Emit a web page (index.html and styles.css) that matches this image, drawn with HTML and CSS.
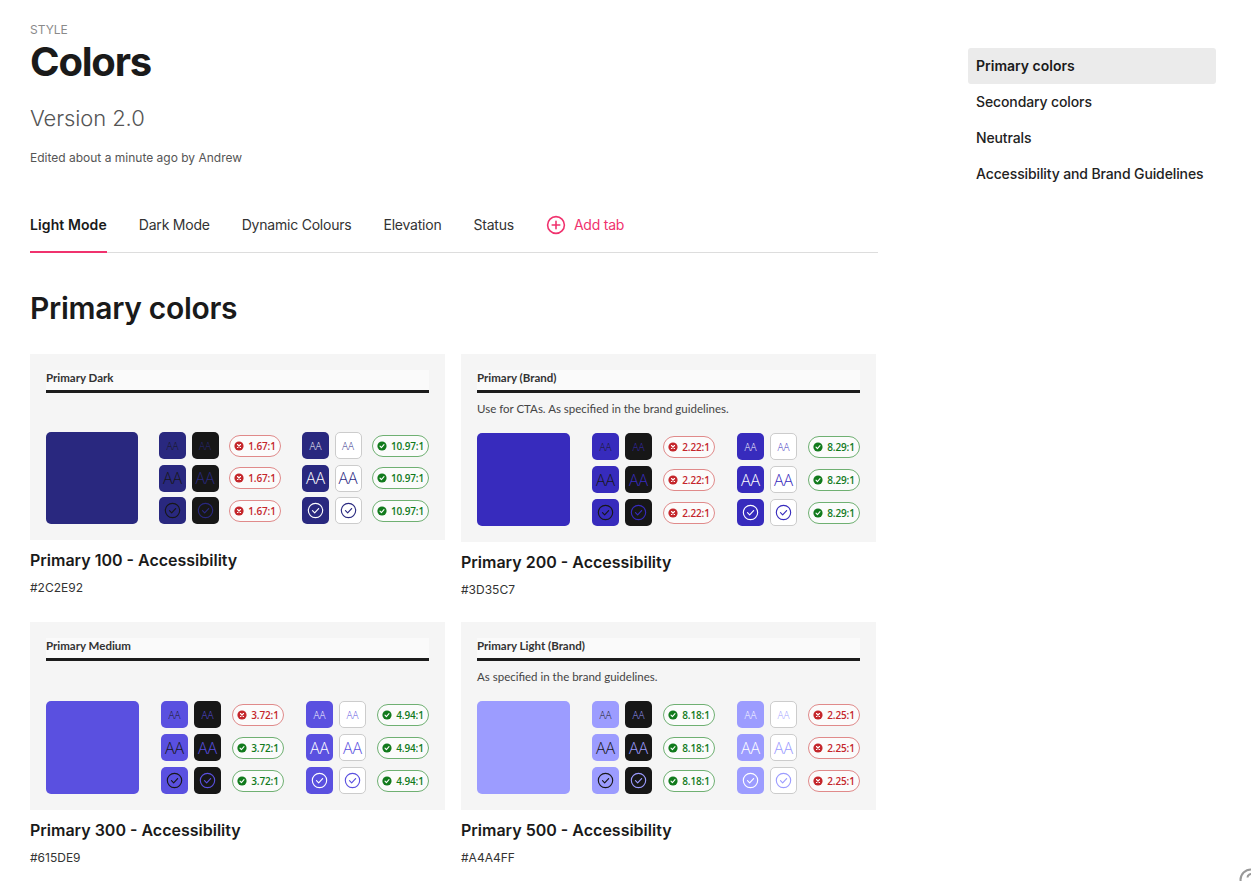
FILE: index.html
```html
<!DOCTYPE html>
<html lang="en">

<head>
    <meta charset="UTF-8">
    <meta name="viewport" content="width=device-width, initial-scale=1.0">
    <title>Colors</title>
    <link rel="stylesheet" href="styles.css">
</head>

<body>

    <svg class="sprites" width="0" height="0">
        <symbol id="check" viewBox="0 0 18 18">
            <circle cx="9" cy="9" r="7.6" fill="none" stroke="currentColor" stroke-width="1.2"/>
            <path d="M5.8 9.2l2.3 2.3 4.2-4.6" fill="none" stroke="currentColor" stroke-width="1.2" stroke-linecap="round" stroke-linejoin="round"/>
        </symbol>
        <symbol id="pass" viewBox="0 0 10 10">
            <circle cx="5" cy="5" r="4.6" fill="currentColor"/>
            <path d="M3 5.2l1.4 1.4 2.6-2.9" fill="none" stroke="#fff" stroke-width="1.1" stroke-linecap="round" stroke-linejoin="round"/>
        </symbol>
        <symbol id="fail" viewBox="0 0 10 10">
            <circle cx="5" cy="5" r="4.6" fill="currentColor"/>
            <path d="M3.5 3.5l3 3m0-3l-3 3" fill="none" stroke="#fff" stroke-width="1.1" stroke-linecap="round"/>
        </symbol>
    </svg>

    <div class="page">
        <main class="content">
            <div class="eyebrow">STYLE</div>
            <h1>Colors</h1>
            <p class="version">Version 2.0</p>
            <p class="edited">Edited about a minute ago by Andrew</p>

            <nav class="tabs">
                <a class="tab active">Light Mode</a>
                <a class="tab">Dark Mode</a>
                <a class="tab">Dynamic Colours</a>
                <a class="tab">Elevation</a>
                <a class="tab">Status</a>
                <a class="tab add-tab">
                    <svg width="20" height="20" viewBox="0 0 20 20">
                        <circle cx="10" cy="10" r="8.4" fill="none" stroke="currentColor" stroke-width="1.6"/>
                        <path d="M10 6.2v7.6M6.2 10h7.6" stroke="currentColor" stroke-width="1.6" stroke-linecap="round"/>
                    </svg>
                    Add tab
                </a>
            </nav>

            <h2>Primary colors</h2>

            <div class="cards">
                <section class="card p100">
                    <div class="sheet sheet-small">
                        <div class="sheet-title">Primary Dark</div>
                        <p class="sheet-desc"></p>
                        <div class="sheet-body">
                            <div class="swatch"></div>
                            <div class="checks">
                                <div class="tile on-color">AA</div><div class="tile on-black">AA</div><div class="pill bad"><svg><use href="#fail"/></svg>1.67:1</div>
                                <div class="tile on-color big">AA</div><div class="tile on-black big">AA</div><div class="pill bad"><svg><use href="#fail"/></svg>1.67:1</div>
                                <div class="tile on-color"><svg><use href="#check"/></svg></div><div class="tile on-black"><svg><use href="#check"/></svg></div><div class="pill bad"><svg><use href="#fail"/></svg>1.67:1</div>
                            </div>
                            <div class="checks checks-wide">
                                <div class="tile white-on-color">AA</div><div class="tile on-white">AA</div><div class="pill good"><svg><use href="#pass"/></svg>10.97:1</div>
                                <div class="tile white-on-color big">AA</div><div class="tile on-white big">AA</div><div class="pill good"><svg><use href="#pass"/></svg>10.97:1</div>
                                <div class="tile white-on-color"><svg><use href="#check"/></svg></div><div class="tile on-white"><svg><use href="#check"/></svg></div><div class="pill good"><svg><use href="#pass"/></svg>10.97:1</div>
                            </div>
                        </div>
                    </div>
                    <h3>Primary 100 - Accessibility</h3>
                    <p class="hex">#2C2E92</p>
                </section>

                <section class="card p200">
                    <div class="sheet">
                        <div class="sheet-title">Primary (Brand)</div>
                        <p class="sheet-desc">Use for CTAs. As specified in the brand guidelines.</p>
                        <div class="sheet-body">
                            <div class="swatch"></div>
                            <div class="checks">
                                <div class="tile on-color">AA</div><div class="tile on-black">AA</div><div class="pill bad"><svg><use href="#fail"/></svg>2.22:1</div>
                                <div class="tile on-color big">AA</div><div class="tile on-black big">AA</div><div class="pill bad"><svg><use href="#fail"/></svg>2.22:1</div>
                                <div class="tile on-color"><svg><use href="#check"/></svg></div><div class="tile on-black"><svg><use href="#check"/></svg></div><div class="pill bad"><svg><use href="#fail"/></svg>2.22:1</div>
                            </div>
                            <div class="checks">
                                <div class="tile white-on-color">AA</div><div class="tile on-white">AA</div><div class="pill good"><svg><use href="#pass"/></svg>8.29:1</div>
                                <div class="tile white-on-color big">AA</div><div class="tile on-white big">AA</div><div class="pill good"><svg><use href="#pass"/></svg>8.29:1</div>
                                <div class="tile white-on-color"><svg><use href="#check"/></svg></div><div class="tile on-white"><svg><use href="#check"/></svg></div><div class="pill good"><svg><use href="#pass"/></svg>8.29:1</div>
                            </div>
                        </div>
                    </div>
                    <h3>Primary 200 - Accessibility</h3>
                    <p class="hex">#3D35C7</p>
                </section>

                <section class="card p300">
                    <div class="sheet">
                        <div class="sheet-title">Primary Medium</div>
                        <p class="sheet-desc"></p>
                        <div class="sheet-body">
                            <div class="swatch"></div>
                            <div class="checks">
                                <div class="tile on-color">AA</div><div class="tile on-black">AA</div><div class="pill bad"><svg><use href="#fail"/></svg>3.72:1</div>
                                <div class="tile on-color big">AA</div><div class="tile on-black big">AA</div><div class="pill good"><svg><use href="#pass"/></svg>3.72:1</div>
                                <div class="tile on-color"><svg><use href="#check"/></svg></div><div class="tile on-black"><svg><use href="#check"/></svg></div><div class="pill good"><svg><use href="#pass"/></svg>3.72:1</div>
                            </div>
                            <div class="checks">
                                <div class="tile white-on-color">AA</div><div class="tile on-white">AA</div><div class="pill good"><svg><use href="#pass"/></svg>4.94:1</div>
                                <div class="tile white-on-color big">AA</div><div class="tile on-white big">AA</div><div class="pill good"><svg><use href="#pass"/></svg>4.94:1</div>
                                <div class="tile white-on-color"><svg><use href="#check"/></svg></div><div class="tile on-white"><svg><use href="#check"/></svg></div><div class="pill good"><svg><use href="#pass"/></svg>4.94:1</div>
                            </div>
                        </div>
                    </div>
                    <h3>Primary 300 - Accessibility</h3>
                    <p class="hex">#615DE9</p>
                </section>

                <section class="card p500">
                    <div class="sheet">
                        <div class="sheet-title">Primary Light (Brand)</div>
                        <p class="sheet-desc">As specified in the brand guidelines.</p>
                        <div class="sheet-body">
                            <div class="swatch"></div>
                            <div class="checks">
                                <div class="tile on-color">AA</div><div class="tile on-black">AA</div><div class="pill good"><svg><use href="#pass"/></svg>8.18:1</div>
                                <div class="tile on-color big">AA</div><div class="tile on-black big">AA</div><div class="pill good"><svg><use href="#pass"/></svg>8.18:1</div>
                                <div class="tile on-color"><svg><use href="#check"/></svg></div><div class="tile on-black"><svg><use href="#check"/></svg></div><div class="pill good"><svg><use href="#pass"/></svg>8.18:1</div>
                            </div>
                            <div class="checks">
                                <div class="tile white-on-color">AA</div><div class="tile on-white">AA</div><div class="pill bad"><svg><use href="#fail"/></svg>2.25:1</div>
                                <div class="tile white-on-color big">AA</div><div class="tile on-white big">AA</div><div class="pill bad"><svg><use href="#fail"/></svg>2.25:1</div>
                                <div class="tile white-on-color"><svg><use href="#check"/></svg></div><div class="tile on-white"><svg><use href="#check"/></svg></div><div class="pill bad"><svg><use href="#fail"/></svg>2.25:1</div>
                            </div>
                        </div>
                    </div>
                    <h3>Primary 500 - Accessibility</h3>
                    <p class="hex">#A4A4FF</p>
                </section>
            </div>
        </main>

        <aside class="toc">
            <a class="toc-item active">Primary colors</a>
            <a class="toc-item">Secondary colors</a>
            <a class="toc-item">Neutrals</a>
            <a class="toc-item">Accessibility and Brand Guidelines</a>
        </aside>
    </div>

    <svg class="help" width="24" height="24" viewBox="0 0 24 24">
        <circle cx="12" cy="12" r="10.5" fill="none" stroke="#999" stroke-width="2"/>
        <path d="M8.5 9.5a3.5 3.5 0 1 1 5.5 2.9c-1.2.8-2 1.4-2 2.8" fill="none" stroke="#999" stroke-width="2"/>
    </svg>

</body>

</html>
```

FILE: styles.css
```css
html, body {
    height: 100%;
    overflow: hidden;
}

body {
    margin: 0;
    background-color: #fff;
    color: #1a1a1a;
    font-family: Inter, "Liberation Sans", sans-serif;
}

.sprites {
    display: block;
    height: 0;
}

.page {
    display: flex;
    align-items: flex-start;
    padding: 0 35px 0 30px;
}

.content {
    width: 848px;
    flex-shrink: 0;
    padding-top: 23px;
}

.eyebrow {
    font-size: 12px;
    line-height: 14px;
    color: #8a8a8a;
}

h1 {
    margin: 0;
    font-size: 40px;
    line-height: 50px;
    font-weight: 700;
    letter-spacing: -1.2px;
}

.version {
    margin: 16px 0 0;
    font-size: 22px;
    line-height: 30px;
    font-weight: 300;
    letter-spacing: -0.1px;
    color: #555;
}

.edited {
    margin: 17px 0 0;
    font-size: 12px;
    line-height: 16px;
    color: #555;
}

.tabs {
    display: flex;
    gap: 32px;
    margin-top: 32px;
    border-bottom: 1px solid #ddd;
}

.tab {
    display: flex;
    align-items: center;
    height: 55px;
    box-sizing: border-box;
    margin-bottom: -1px;
    border-bottom: 2px solid transparent;
    font-size: 14px;
    letter-spacing: -0.22px;
    color: #333;
}

.tab.active {
    font-weight: 600;
    letter-spacing: 0.1px;
    color: #1a1a1a;
    border-bottom-color: #f0326e;
}

.add-tab {
    gap: 8px;
    color: #f0326e;
}

h2 {
    margin: 35px 0 0;
    font-size: 30px;
    line-height: 40px;
    font-weight: 600;
    letter-spacing: -0.3px;
}

.cards {
    display: grid;
    grid-template-columns: 415px 415px;
    column-gap: 16px;
    row-gap: 24px;
    margin-top: 26px;
    align-items: end;
}

.card:nth-child(-n+2) {
    align-self: start;
}

.p100 { --c: #29287f; }
.p200 { --c: #372bbd; }
.p300 { --c: #5a50e0; }
.p500 { --c: #9c9cff; }

.sheet {
    display: flex;
    flex-direction: column;
    padding: 16px;
    background-color: #f5f5f5;
    font-family: Lato, "Open Sans", sans-serif;
}

.sheet-title {
    height: 20px;
    box-sizing: border-box;
    background-color: #fafafa;
    font-size: 11.5px;
    line-height: 15px;
    font-weight: 700;
    color: #333;
}

.sheet-desc {
    height: 40px;
    margin: 0;
    border-top: 3px solid #1c1c1c;
    font-size: 11.5px;
    line-height: 32px;
    color: #444;
}

.sheet-body {
    display: flex;
    gap: 22px;
    align-items: flex-start;
}

.swatch {
    width: 93px;
    height: 93px;
    border-radius: 5px;
    background-color: var(--c);
}

.checks {
    display: grid;
    grid-template-columns: 27px 27px 57px;
    grid-auto-rows: 27px;
    gap: 6px;
    align-items: center;
}

.sheet-small .sheet-desc {
    height: 39px;
}

.sheet-small .sheet-body {
    gap: 21px;
}

.sheet-small .swatch {
    width: 92px;
    height: 92px;
}

.sheet-small .checks {
    gap: 5.5px;
}

.checks-wide {
    grid-template-columns: 27px 27px 62px;
}

.tile {
    display: flex;
    align-items: center;
    justify-content: center;
    width: 27px;
    height: 27px;
    box-sizing: border-box;
    border-radius: 5px;
    font-family: "Open Sans", sans-serif;
    font-size: 10px;
    font-weight: 300;
}

.tile.big {
    font-size: 16px;
}

.tile svg {
    width: 17px;
    height: 17px;
}

.on-color {
    background-color: var(--c);
    color: #171717;
}

.on-black {
    background-color: #171717;
    color: var(--c);
}

.white-on-color {
    background-color: var(--c);
    color: #fff;
}

.on-white {
    background-color: #fff;
    border: 1px solid #ccc;
    color: var(--c);
}

.pill {
    display: flex;
    align-items: center;
    justify-content: center;
    gap: 4px;
    height: 22px;
    box-sizing: border-box;
    margin-left: 5px;
    border-radius: 11px;
    font-family: "Open Sans", sans-serif;
    font-size: 10px;
    font-weight: 600;
    letter-spacing: -0.15px;
    background-color: #fbfbfb;
}

.pill svg {
    width: 10px;
    height: 10px;
}

.pill.bad {
    border: 1px solid #e08a8a;
    color: #c4262b;
}

.pill.good {
    border: 1px solid #6fb072;
    color: #117a1c;
}

h3 {
    margin: 10px 0 0;
    font-size: 16px;
    line-height: 20px;
    font-weight: 600;
}

.hex {
    margin: 10px 0 0;
    font-size: 12px;
    line-height: 16px;
    color: #333;
}

.toc {
    display: flex;
    flex-direction: column;
    width: 248px;
    margin-left: 90px;
    margin-top: 48px;
}

.toc-item {
    height: 36px;
    padding: 0 8px;
    font-size: 14px;
    line-height: 36px;
    font-weight: 500;
    letter-spacing: -0.12px;
    color: #222;
    white-space: nowrap;
}

.toc-item.active {
    background-color: #ebebeb;
    border-radius: 3px;
    font-weight: 600;
    letter-spacing: 0;
    color: #1a1a1a;
}

.help {
    position: fixed;
    left: 1239px;
    top: 868px;
}
```
